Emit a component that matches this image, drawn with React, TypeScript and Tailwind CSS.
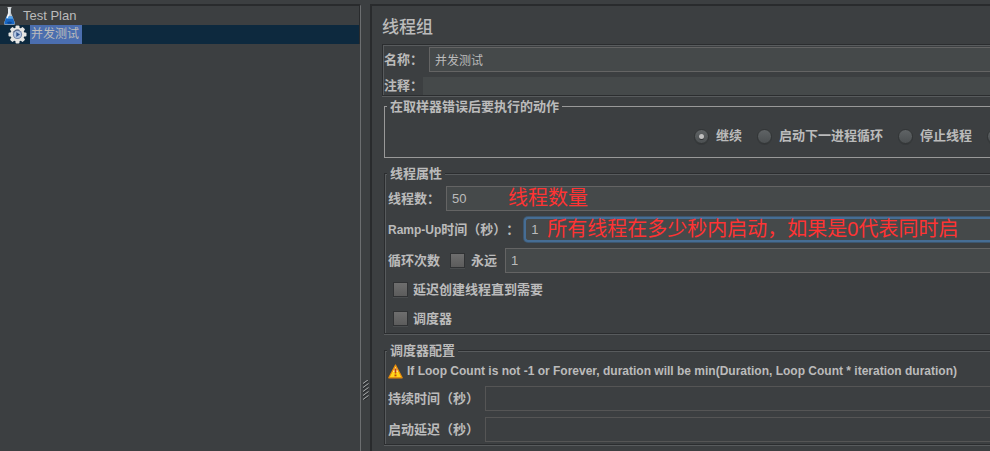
import React, { useState } from "react";

const field =
  "h-[25px] min-w-0 flex-1 border border-r-0 border-[#646464] bg-[#45494a] px-[5px] font-normal text-[#bbbbbb] outline-none";
const disabledField =
  "h-[25px] min-w-0 flex-1 border border-r-0 border-[#555555] bg-[#3c3f41] px-[5px] font-normal outline-none";
const etched =
  "min-w-0 border border-r-0 border-[#2b2d2f] shadow-[inset_1px_1px_0_#585b5d,0_1px_0_#585b5d]";
const legend = "ml-0.5 h-[17px] bg-[#3c3f41] px-[3px] leading-[17px]";
const check =
  "h-[15px] w-[15px] shrink-0 appearance-none border border-[#303234] bg-linear-to-b from-[#6e6e6e] to-[#5c5c5c] shadow-[0_1px_0_#4a4d4f] checked:from-[#9a9a9a]";
const radio =
  "grid h-[15px] w-[15px] shrink-0 appearance-none place-items-center rounded-full border border-[#323536] bg-linear-to-b from-[#5f6365] to-[#4c5052] shadow-[0_1px_0_#35383a] checked:before:h-[5px] checked:before:w-[5px] checked:before:rounded-full checked:before:bg-[#c0c0c0] checked:before:shadow-[0_1px_0_#2f3234] checked:before:content-['']";

function FlaskIcon() {
  return (
    <svg className="h-[18px] w-[13px] shrink-0" viewBox="0 0 13 18" aria-hidden="true">
      <path d="M5 1h3v5l4 10q.2 1.700-1 1.700H2q-1.200 0-1-1.700L5 6z" fill="#c3ccd3" />
      <path d="M3.500 9.500h6l2.200 6.500q0 1.200-.8 1.200H2.100q-.8 0-.8-1.200z" fill="#1767c4" />
      <path d="M3.500 9.500h6l.8 2.200H2.700z" fill="#58a4ea" />
      <path d="M4 15.500q2.500-2 5 0l-1 1.200H5z" fill="#0b4796" />
      <path d="M4.500.7h4" stroke="#eef1f3" strokeWidth="1" />
      <path d="M6 2v5L4 11" stroke="#fff" strokeWidth="1.200" fill="none" />
    </svg>
  );
}

function GearIcon() {
  return (
    <svg className="h-[19px] w-[19px] shrink-0" viewBox="-9.500 -9.500 19 19" aria-hidden="true">
      <g fill="#e6e6e4">
        {[0, 45, 90, 135].map((angle) => (
          <rect key={angle} x="-2" y="-9" width="4" height="18" rx="1" transform={`rotate(${angle})`} />
        ))}
        <circle r="7" />
      </g>
      <circle r="4.600" fill="#6f84ab" />
      <circle r="3.600" fill="#b3c5e0" />
      <path d="M-1.200-2.500 2.500 0-1.200 2.500z" fill="#2f538e" />
      <path d="M-4.200-2A4.600 4.600 0 0 1 2-4.200" stroke="#46587a" fill="none" />
    </svg>
  );
}

function WarningIcon() {
  return (
    <svg className="h-[15px] w-[15px] shrink-0" viewBox="0 0 15 15" aria-hidden="true">
      <path d="M7.500 1 14.200 13.800H.8z" fill="#ffd61a" stroke="#e8890c" strokeWidth="1.200" strokeLinejoin="round" />
      <path d="M7.500 3 10 8H5z" fill="#ffe9a0" />
      <path d="M6.400 4.500h2.200l-.4 5H6.800z" fill="#c2410c" />
      <rect x="6.500" y="10.500" width="2" height="1.800" fill="#c2410c" />
    </svg>
  );
}

function Grip() {
  return (
    <svg className="h-5 w-[6px]" viewBox="0 0 6 20" aria-hidden="true">
      {[0, 4, 8, 12, 16].map((y) => (
        <g key={y}>
          <path d={`M0 ${y + 3.500} 5.500 ${y - 0.500}`} stroke="#a9abac" strokeWidth="1" />
          <path d={`M0 ${y + 5} 5.500 ${y + 1}`} stroke="#24272a" strokeWidth="1" />
        </g>
      ))}
    </svg>
  );
}

function Note({ children }: { children: React.ReactNode }) {
  return <span className="whitespace-nowrap text-xl leading-[25px] font-normal text-[#ff3333]">{children}</span>;
}

export default function App() {
  const [action, setAction] = useState("continue");
  const actions = [
    { id: "continue", label: "继续" },
    { id: "next", label: "启动下一进程循环" },
    { id: "stop", label: "停止线程" },
  ];

  return (
    <div className="flex min-h-screen overflow-hidden bg-[#3c3f41] pt-1 font-['Liberation_Sans','Noto_Sans_CJK_SC',sans-serif] text-[13px] text-[#bbbbbb] [text-spacing-trim:space-all]">
      <nav className="w-[361px] shrink-0 border-t-2 border-r border-t-[#292b2d] border-r-[#6c6e70]">
        <ul className="border-r border-[#292b2d] leading-[19px]">
          <li className="flex h-[19px] items-center gap-[7px] pl-[3px]">
            <FlaskIcon />
            <span>Test Plan</span>
          </li>
          <li className="flex h-[19px] items-center gap-[3px] bg-[#0d293e] pl-2">
            <GearIcon />
            <span className="h-[19px] bg-[#4b6eaf] pr-[3px] pl-px text-xs leading-[19px]">并发测试</span>
          </li>
        </ul>
      </nav>

      <div className="flex w-[9px] shrink-0 justify-center pt-[376px]">
        <Grip />
      </div>

      <main className="min-w-0 flex-1 border-t-2 border-l-2 border-[#292b2d] pl-[10px] font-bold">
        <h1 className="pt-3 pb-[6px] text-[17px] leading-5 font-medium">线程组</h1>

        <section className={`${etched} pt-0.5 pl-px`}>
          <div className="flex items-center gap-[6px]">
            <label htmlFor="name">名称：</label>
            <input id="name" className={`${field} text-xs`} defaultValue="并发测试" />
          </div>
          <div className="mt-[5px] flex h-[18px] items-center">
            <label htmlFor="comment">注释：</label>
            <input
              id="comment"
              className="h-[18px] min-w-0 flex-1 bg-[#45494a] px-[5px] text-xs font-normal outline-none"
            />
          </div>
        </section>

        <div className="pl-0.5">
          <fieldset className="mt-0.5 min-w-0 overflow-hidden border border-r-0 border-[#999999]">
            <legend className={legend}>在取样器错误后要执行的动作</legend>
            <div className="flex h-[42px] items-center gap-[15px] pl-[309px]">
              {actions.map((item) => (
                <label key={item.id} className="flex shrink-0 items-center gap-[7px]">
                  <input
                    type="radio"
                    name="action"
                    className={radio}
                    checked={action === item.id}
                    onChange={() => setAction(item.id)}
                  />
                  {item.label}
                </label>
              ))}
              <input
                type="radio"
                name="action"
                aria-label="停止测试"
                className={radio}
                checked={action === "stopTest"}
                onChange={() => setAction("stopTest")}
              />
            </div>
          </fieldset>

          <fieldset className={`${etched} mt-[7px]`}>
            <legend className={legend}>线程属性</legend>
            <div className="flex flex-col gap-[6px] pt-1 pl-[3px]">
              <div className="flex items-center gap-[6px]">
                <label htmlFor="threads">线程数：</label>
                <div className="relative flex min-w-0 flex-1">
                  <input id="threads" className={field} defaultValue="50" />
                  <div className="pointer-events-none absolute top-0 left-[62px] flex">
                    <Note>线程数量</Note>
                  </div>
                </div>
              </div>
              <div className="flex items-center gap-[5px]">
                <label htmlFor="ramp" className="whitespace-nowrap">
                  <span className="text-xs">Ramp-Up</span>时间（秒）：
                </label>
                <div className="relative flex min-w-0 flex-1">
                  <input
                    id="ramp"
                    className="h-[25px] min-w-0 flex-1 rounded-l-sm border-2 border-r-0 border-[#466d94] bg-[#45494a] px-[5px] font-normal text-[#bbbbbb] shadow-[0_0_0_1px_#3d566e] outline-none"
                    defaultValue="1"
                  />
                  <div className="pointer-events-none absolute top-0 left-[23px] flex">
                    <Note>所有线程在多少秒内启动，如果是0代表同时启</Note>
                  </div>
                </div>
              </div>
              <div className="flex items-center">
                <label htmlFor="loops" className="mr-[10px]">
                  循环次数
                </label>
                <label className="mr-2 flex items-center gap-[6px]">
                  <input type="checkbox" className={check} />
                  永远
                </label>
                <input id="loops" className={field} defaultValue="1" />
              </div>
            </div>
            <div className="flex flex-col pt-0.5 pl-2">
              <label className="flex h-[29px] items-center gap-[5px]">
                <input type="checkbox" className={check} />
                延迟创建线程直到需要
              </label>
              <label className="flex h-[29px] items-center gap-[5px]">
                <input type="checkbox" className={check} />
                调度器
              </label>
            </div>
          </fieldset>

          <fieldset className={`${etched} mt-2`}>
            <legend className={legend}>调度器配置</legend>
            <div className="pt-px pb-0.5 pl-[3px]">
              <p className="flex h-[22px] items-center gap-1 text-xs whitespace-nowrap">
                <WarningIcon />
                If Loop Count is not -1 or Forever, duration will be min(Duration, Loop Count * iteration duration)
              </p>
              <div className="mt-1 flex items-center gap-[6px]">
                <label htmlFor="duration">持续时间（秒）</label>
                <input id="duration" className={disabledField} disabled />
              </div>
              <div className="mt-[6px] flex items-center gap-[6px]">
                <label htmlFor="delay">启动延迟（秒）</label>
                <input id="delay" className={disabledField} disabled />
              </div>
            </div>
          </fieldset>
        </div>
      </main>
    </div>
  );
}
